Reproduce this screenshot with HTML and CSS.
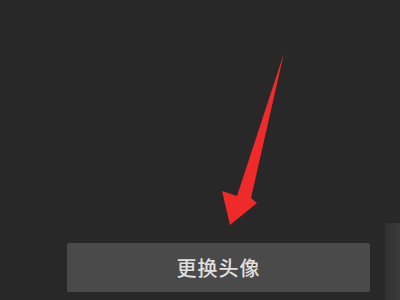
FILE: index.html
```html
<!DOCTYPE html>
<html lang="zh-CN">
<head>
  <meta charset="UTF-8">
  <meta name="viewport" content="width=device-width, initial-scale=1.0">
  <title>更换头像</title>
  <link rel="stylesheet" href="styles.css">
</head>
<body>
  <div class="screen">
    <div class="bottom-row">
      <button class="change-button">更换头像</button>
      <div class="side-edge"></div>
    </div>

    <svg class="pointer-arrow" width="400" height="300" viewBox="0 0 400 300">
      <polygon points="284,53 251,198 257,203 230,225 222,191 237,196" fill="#ee2a2b"/>
    </svg>
  </div>
</body>
</html>
```

FILE: styles.css
```css
body {
  margin: 0;
  background: #282828;
}
.screen {
  position: relative;
  width: 400px;
  height: 300px;
  display: flex;
  flex-direction: column;
  justify-content: flex-end;
  overflow: hidden;
}
.bottom-row {
  display: flex;
  align-items: flex-end;
}
.change-button {
  margin-left: 67px;
  margin-bottom: 8px;
  width: 303px;
  height: 49px;
  padding: 0;
  border: none;
  border-radius: 2px;
  background: #4a4a4a;
  color: #e0e0e0;
  font-family: "Noto Sans CJK SC", sans-serif;
  font-size: 20px;
  font-weight: 500;
  letter-spacing: 1px;
}
.side-edge {
  margin-left: 15px;
  width: 15px;
  height: 77px;
  border-radius: 3px 0 0 0;
  background: linear-gradient(to right, #303030, #3a3a3a);
}
.pointer-arrow {
  position: absolute;
  top: 0;
  left: 0;
}
```
